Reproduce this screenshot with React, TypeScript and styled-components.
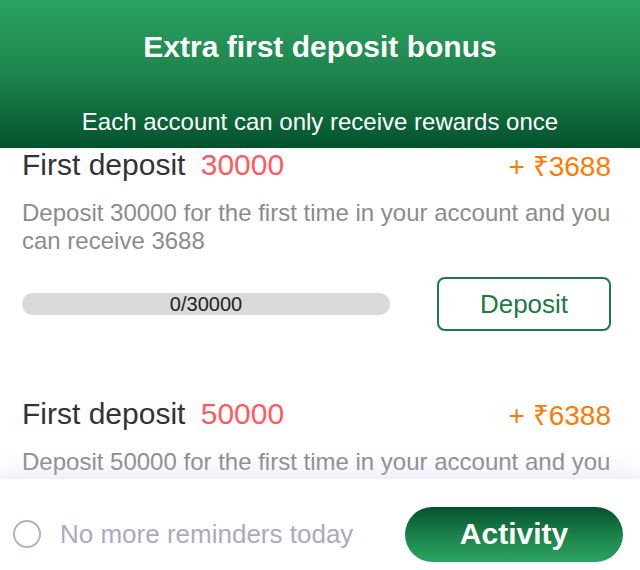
import React, { useState } from "react";
import styled, { createGlobalStyle } from "styled-components";

type TReward = {
  readonly amount: number;
  readonly bonus: number;
  readonly progress: number;
};

const rewards: TReward[] = [
  { amount: 30000, bonus: 3688, progress: 0 },
  { amount: 50000, bonus: 6388, progress: 0 },
];

export default function App() {
  const [muted, setMuted] = useState(false);

  return (
    <>
      <GlobalStyle />
      <Dialog>
        <Header>
          <Title>Extra first deposit bonus</Title>
          <Subtitle>Each account can only receive rewards once</Subtitle>
        </Header>
        <List>
          {rewards.map(({ amount, bonus, progress }) => (
            <Item key={amount}>
              <ItemHead>
                <ItemLabel>
                  First deposit <Amount>{amount}</Amount>
                </ItemLabel>
                <Bonus>+ ₹{bonus}</Bonus>
              </ItemHead>
              <Description>
                Deposit {amount} for the first time in your account and you can
                receive {bonus}
              </Description>
              <ProgressRow>
                <Track>
                  <Fill style={{ width: `${(progress / amount) * 100}%` }} />
                  <TrackText>
                    {progress}/{amount}
                  </TrackText>
                </Track>
                <DepositButton>Deposit</DepositButton>
              </ProgressRow>
            </Item>
          ))}
        </List>
        <Footer>
          <Reminder onClick={() => setMuted(!muted)}>
            <Circle $checked={muted} />
            No more reminders today
          </Reminder>
          <ActivityButton>Activity</ActivityButton>
        </Footer>
      </Dialog>
    </>
  );
}

const GlobalStyle = createGlobalStyle`
  html, body {
    margin: 0;
    padding: 0;
    background: #fff;
  }
  body {
    font-family: "Liberation Sans", Arial, sans-serif;
  }
`;

const Dialog = styled.div`
  width: 640px;
  height: 570px;
  display: flex;
  flex-direction: column;
  overflow: hidden;
  background: #fff;
`;

const Header = styled.div`
  height: 148px;
  flex-shrink: 0;
  box-sizing: border-box;
  padding-top: 28px;
  display: flex;
  flex-direction: column;
  align-items: center;
  background: linear-gradient(180deg, #2ba362 0%, #1d844c 50%, #03522d 100%);
  color: #fff;
`;

const Title = styled.h1`
  margin: 0;
  font-size: 30px;
  font-weight: 700;
  line-height: 38px;
`;

const Subtitle = styled.div`
  margin-top: 41px;
  font-size: 24px;
  line-height: 30px;
`;

const List = styled.div`
  flex: 1;
  overflow: hidden;
  padding: 0 29px 0 22px;
`;

const Item = styled.div`
  padding-bottom: 66px;
`;

const ItemHead = styled.div`
  display: flex;
  justify-content: space-between;
  align-items: center;
  height: 34px;
`;

const ItemLabel = styled.div`
  font-size: 30px;
  color: #333;
  line-height: 34px;
`;

const Amount = styled.span`
  margin-left: 7px;
  color: #ff5b5f;
`;

const Bonus = styled.div`
  font-size: 28px;
  color: #ff7a00;
`;

const Description = styled.p`
  margin: 17px 0 0;
  font-size: 24px;
  line-height: 28px;
  color: #8c8c8c;
`;

const ProgressRow = styled.div`
  margin-top: 22px;
  display: flex;
  align-items: center;
  justify-content: space-between;
`;

const Track = styled.div`
  position: relative;
  width: 368px;
  height: 22px;
  border-radius: 11px;
  background: #d9d9d9;
  overflow: hidden;
`;

const Fill = styled.div`
  height: 100%;
  background: #2ba362;
`;

const TrackText = styled.span`
  position: absolute;
  inset: 0;
  display: flex;
  align-items: center;
  justify-content: center;
  font-size: 20px;
  color: #222;
`;

const DepositButton = styled.button`
  width: 174px;
  height: 54px;
  box-sizing: border-box;
  border: 2px solid #1b7a45;
  border-radius: 8px;
  background: #fff;
  color: #1b7a45;
  font-family: inherit;
  font-size: 26px;
  cursor: pointer;
`;

const Footer = styled.div`
  position: relative;
  z-index: 1;
  height: 91px;
  flex-shrink: 0;
  box-sizing: border-box;
  padding: 19px 17px 0 13px;
  display: flex;
  align-items: center;
  justify-content: space-between;
  background: #fff;
  box-shadow: 0 -6px 22px rgba(205, 205, 235, 0.45);
`;

const Reminder = styled.label`
  display: flex;
  align-items: center;
  gap: 19px;
  font-size: 26px;
  color: #a9abc0;
  cursor: pointer;
`;

const Circle = styled.span<{ $checked: boolean }>`
  width: 28px;
  height: 28px;
  box-sizing: border-box;
  border-radius: 50%;
  border: 2px solid #b0b3c8;
  background: ${({ $checked }) => ($checked ? "#1b7a45" : "#fff")};
`;

const ActivityButton = styled.button`
  width: 218px;
  height: 55px;
  border: none;
  border-radius: 28px;
  background: linear-gradient(180deg, #03522d 0%, #1d844c 55%, #2ba362 100%);
  color: #fff;
  font-family: inherit;
  font-size: 30px;
  font-weight: 700;
  cursor: pointer;
`;
